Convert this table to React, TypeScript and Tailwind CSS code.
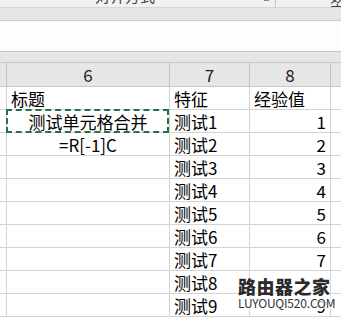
import React from "react";

const font = { fontFamily: '"Noto Sans CJK SC", sans-serif' };
const row = "grid grid-cols-[7px_163px_80px_81px_1fr] h-[23px] border-b border-[#d4d4d4]";
const cell = "border-r border-[#d4d4d4] px-[4px] text-[17px] leading-[23px] whitespace-nowrap";

const data = [1, 2, 3, 4, 5, 6, 7, 8, 9];

export default function App() {
  return (
    <div className="relative h-[318px] w-[341px] overflow-hidden bg-white text-black" style={font}>
      {/* ribbon bottom, text cut off */}
      <div className="relative h-[8px] overflow-hidden border-b border-[#d6d6d6] bg-[#f1f1f1] text-[15px] leading-[15px] text-[#444]">
        <span className="absolute left-[95px] top-[-12px]">对齐方式</span>
        <span className="absolute left-[264px] top-0 h-[2px] w-[5px] border-t border-[#888]" />
        <span className="absolute left-[275px] top-0 h-[7px] w-px bg-[#c6c6c6]" />
        <span className="absolute left-[330px] top-[-12px]">数字</span>
      </div>
      <div className="h-[13px] border-b border-[#cbcbcb] bg-[#e6e6e6]" />
      {/* formula bar */}
      <div className="h-[31px] border-b border-[#c6c6c6] bg-[#fdfdfd]" />
      <div className="h-[10px] bg-[#e6e6e6]" />

      {/* column headers */}
      <div className="grid h-[25px] grid-cols-[7px_163px_80px_81px_1fr] border-y border-[#c8c8c8] bg-[#e6e6e6] text-[17px] leading-[23px] text-[#222]">
        <div className="border-r border-[#c0c0c0]" />
        <div className="border-r border-[#c0c0c0] text-center">6</div>
        <div className="border-r border-[#c0c0c0] text-center">7</div>
        <div className="border-r border-[#c0c0c0] text-center">8</div>
        <div />
      </div>

      {/* first row */}
      <div className={row}>
        <div className="border-r border-[#d4d4d4]" />
        <div className={cell}>标题</div>
        <div className={cell}>特征</div>
        <div className={cell}>经验值</div>
        <div />
      </div>

      {data.map((n) => (
        <div key={n} className={row}>
          <div className="border-r border-[#d4d4d4]" />
          {n === 1 ? (
            <div className={`${cell} relative text-center`}>
              测试单元格合并
              <span className="absolute -left-px -top-px right-0 bottom-0 border-2 border-dashed border-[#217346]" />
            </div>
          ) : n === 2 ? (
            <div className={`${cell} text-center`}>=R[-1]C</div>
          ) : (
            <div className={cell} />
          )}
          <div className={cell}>测试{n}</div>
          <div className={`${cell} text-right`}>{n}</div>
          <div />
        </div>
      ))}

      {/* watermark */}
      <div className="absolute left-[238px] top-[275px] flex flex-col items-start">
        <span className="text-[18px] font-black leading-[22px] tracking-[0.5px] text-[#2a2a2a] [text-shadow:0_0_2px_#fff,0_0_3px_#fff]">
          路由器之家
        </span>
        <span className="-mt-[1px] bg-white/70 text-[12px] leading-[13px] tracking-[-0.2px] text-[#333] [text-shadow:0_0_2px_#fff]">
          LUYOUQI520.COM
        </span>
      </div>
    </div>
  );
}
